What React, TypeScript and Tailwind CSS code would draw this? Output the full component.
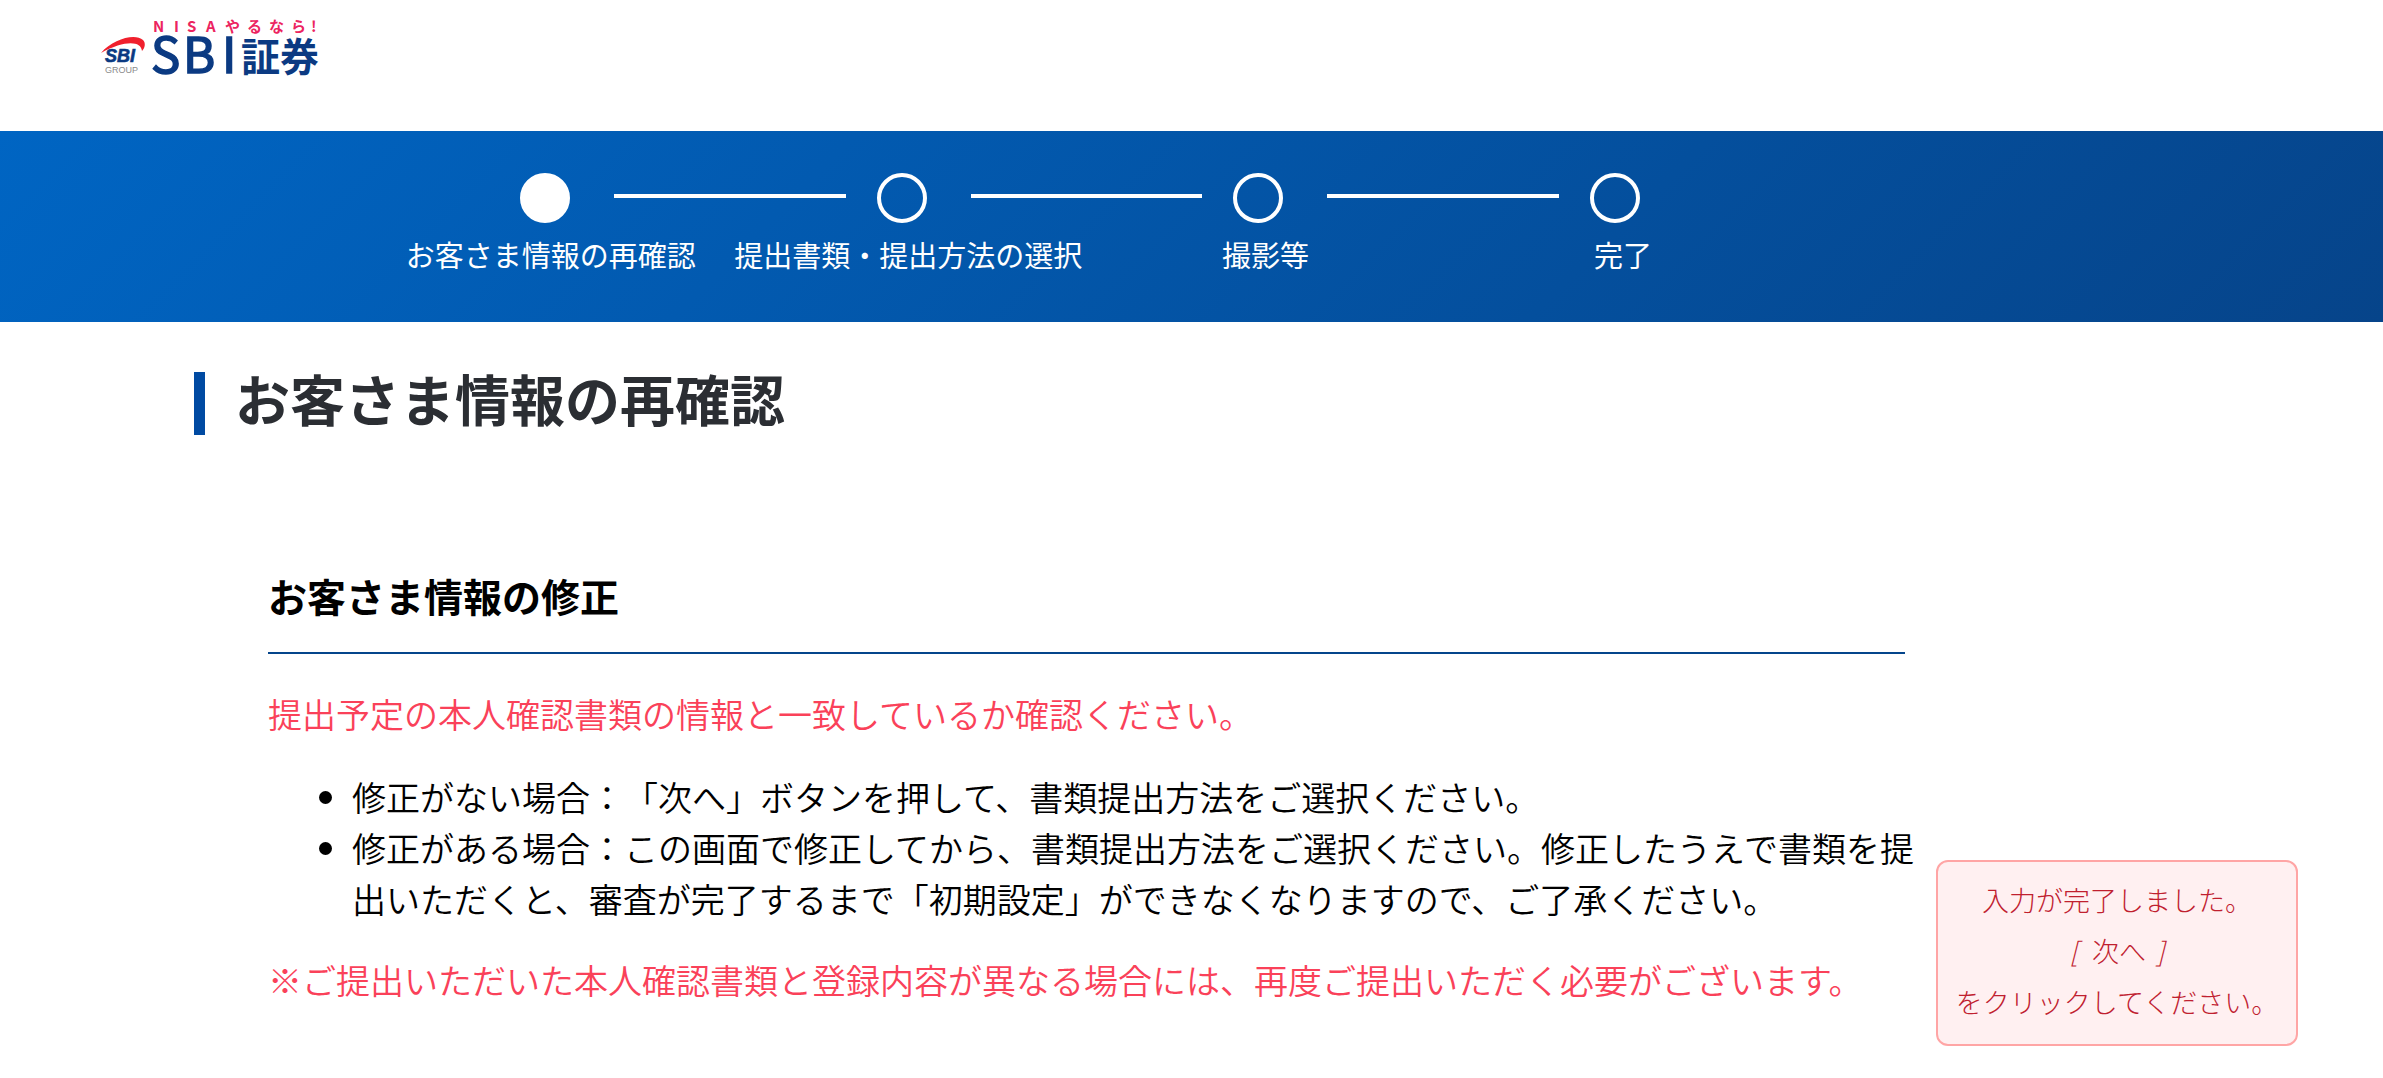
import React from 'react';

const steps = ['お客さま情報の再確認', '提出書類・提出方法の選択', '撮影等', '完了'];

const Logo: React.FC = () => (
  <a href="#" aria-label="SBI証券" className="block w-fit">
    <svg width="230" height="85" viewBox="0 0 230 85">
      <path d="M0 43 C12 29 34 23 42 30 C45 33 44 38 41 41 C40 31 24 30 0 43 Z" fill="#f0202d" />
      <text x="4" y="52" fontSize="18" fontWeight="700" fontStyle="italic" fill="#0b3a82" stroke="#0b3a82" strokeWidth="0.6" fontFamily="Liberation Sans, sans-serif">
        SBI
      </text>
      <text x="4" y="63" fontSize="9" fill="#8a8a8a" fontFamily="Liberation Sans, sans-serif">
        GROUP
      </text>
      <text
        x="52 73 86 105 124 146 168 190 210"
        y="22"
        fontSize="15"
        fontWeight="700"
        fill="#ec2460"
        fontFamily="'Noto Sans CJK JP', sans-serif"
      >
        NISAやるなら!
      </text>
      <text
        x="50 82 121"
        y="63"
        fontSize="49"
        fill="#0b3a82"
        stroke="#0b3a82"
        strokeWidth="1.6"
        fontFamily="'Noto Sans CJK JP', sans-serif"
      >
        SBI
      </text>
      <text x="140 179" y="61" fontSize="39" fontWeight="700" fill="#0b3a82" fontFamily="'Noto Sans CJK JP', sans-serif">
        証券
      </text>
    </svg>
  </a>
);

const StepBar: React.FC = () => (
  <nav aria-label="手続きの流れ" className="bg-linear-[135deg,#0065c3,#06448a] pt-[42px] pb-[46px]">
    <div className="ml-[372px] w-[60%]">
      <div className="flex items-center pr-[162px] pl-[148px]">
        {steps.map((step, i) => (
          <React.Fragment key={step}>
            {i > 0 && <span className="mr-[31px] mb-1 ml-[44px] h-1 flex-1 bg-white" />}
            <span className={`size-[50px] rounded-full border-4 border-white ${i === 0 ? 'bg-white' : ''}`} />
          </React.Fragment>
        ))}
      </div>
      <ol className="mt-[9px] grid grid-cols-4 text-center text-[29px] leading-[44px] whitespace-nowrap text-white">
        {steps.map((step) => (
          <li key={step}>{step}</li>
        ))}
      </ol>
    </div>
  </nav>
);

const App: React.FC = () => {
  return (
    <div className="bg-white font-['Noto_Sans_CJK_JP',sans-serif] text-black [text-spacing-trim:space-all]">
      <header className="h-[131px] pt-[10px] pl-[101px]">
        <Logo />
      </header>
      <StepBar />

      <main>
        <h1 className="mt-[50px] ml-[194px] border-l-[11px] border-[#004aa2] pb-[12px] pl-[30px] text-[55px] leading-[51px] font-bold text-[#2b2e33]">
          お客さま情報の再確認
        </h1>

        <div className="mt-[134px] flex items-end gap-[31px] pr-[85px] pb-[31px] pl-[268px]">
          <section className="mb-[41px] flex-1 text-[34px] leading-[51px] font-[350]">
            <h2 className="border-b-2 border-[#04458b] pb-[31px] text-[39px] leading-[52px] font-bold">お客さま情報の修正</h2>
            <p className="mt-[34px] text-[#fa4159]">提出予定の本人確認書類の情報と一致しているか確認ください。</p>
            <ul className="-mr-4 mt-[32px] list-disc pl-[84px]">
              <li>修正がない場合：「次へ」ボタンを押して、書類提出方法をご選択ください。</li>
              <li>
                修正がある場合：この画面で修正してから、書類提出方法をご選択ください。修正したうえで書類を提出いただくと、審査が完了するまで「初期設定」ができなくなりますので、ご了承ください。
              </li>
            </ul>
            <p className="mt-[30px] text-[#fa4159]">
              ※ご提出いただいた本人確認書類と登録内容が異なる場合には、再度ご提出いただく必要がございます。
            </p>
          </section>

          <aside className="w-[362px] shrink-0 rounded-xl border-2 border-[#ffa5a5] bg-[#fff0f1] pt-[12px] pb-[17px] text-center text-[27px] leading-[51px] font-light text-[#c0202f]">
            <p>入力が完了しました。</p>
            <p>
              <em className="mr-2">[</em> 次へ <em className="ml-1">]</em>
            </p>
            <p>をクリックしてください。</p>
          </aside>
        </div>
      </main>
    </div>
  );
};

export default App;
